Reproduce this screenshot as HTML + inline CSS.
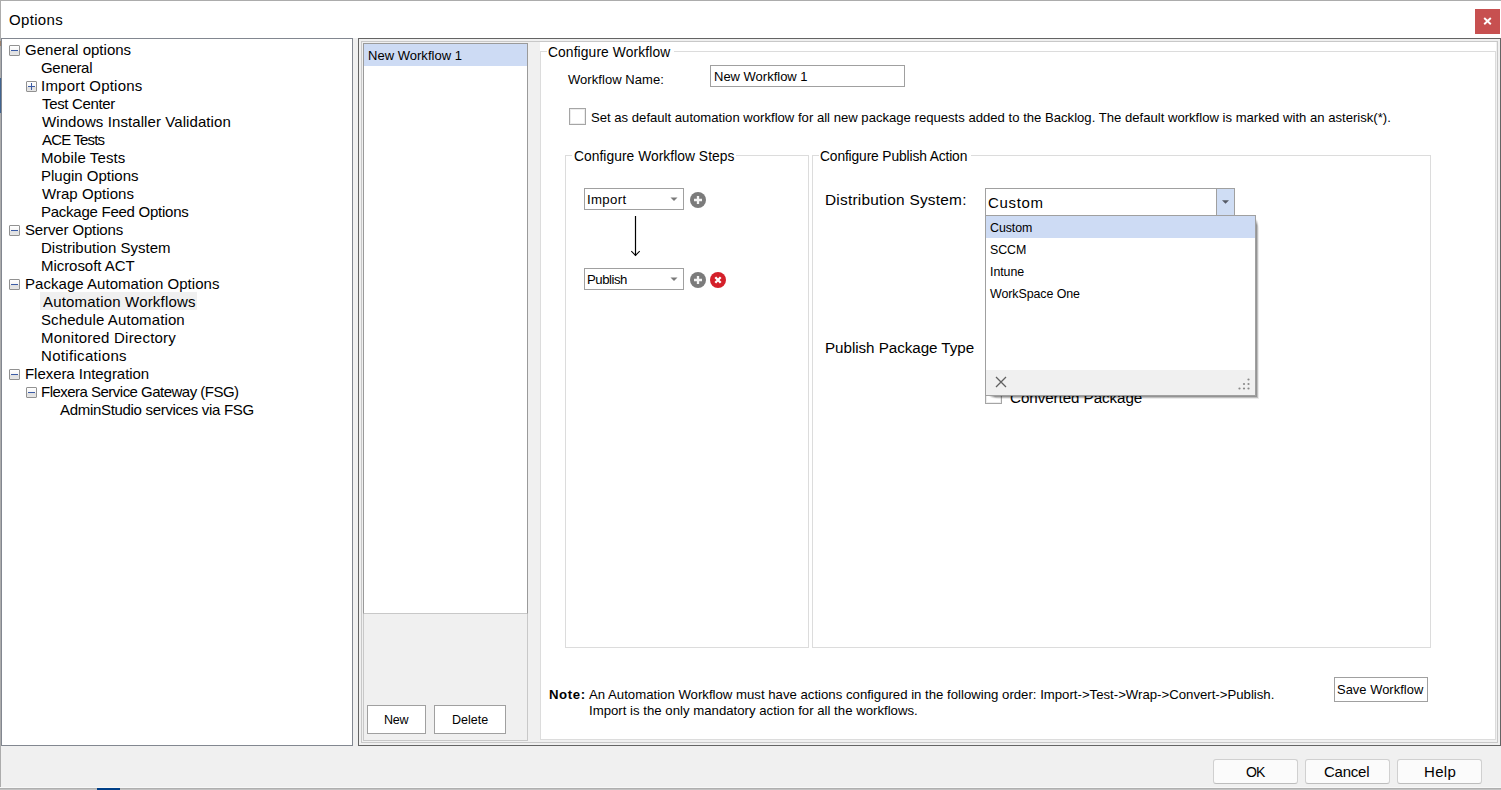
<!DOCTYPE html>
<html><head><meta charset="utf-8"><title>Options</title>
<style>
html,body{margin:0;padding:0;}
body{width:1501px;height:790px;position:relative;overflow:hidden;background:#f0f0f0;
 font-family:"Liberation Sans", sans-serif;}
.t{position:absolute;white-space:pre;}
.r{position:absolute;box-sizing:border-box;}
</style></head><body>
<div class="r" style="left:0px;top:0px;width:1501px;height:38px;background:#fff;"></div>
<div class="r" style="left:0px;top:0px;width:1501px;height:1px;background:#acacac;"></div>
<div class="r" style="left:0px;top:0px;width:1px;height:790px;background:#acacac;"></div>
<div class="r" style="left:0px;top:78px;width:1px;height:35px;background:#41648f;"></div>
<div class="r" style="left:0px;top:41px;width:1px;height:5px;background:#9a7f6a;"></div>
<div class="r" style="left:0px;top:787px;width:1501px;height:1px;background:#f7f7f7;"></div>
<div class="r" style="left:0px;top:788px;width:1501px;height:1px;background:#afafaf;"></div>
<div class="r" style="left:0px;top:789px;width:1501px;height:1px;background:#c2c2c2;"></div>
<div class="r" style="left:97px;top:788px;width:23px;height:2px;background:#003f87;"></div>
<div class="t" style="left:9px;top:12.30px;font-size:15px;line-height:15px;color:#000;font-weight:400;letter-spacing:0.333px;">Options</div>
<div class="r" style="left:1475px;top:9px;width:25px;height:25px;background:#c75050;"></div>
<svg style="position:absolute;left:1483px;top:17px" width="9" height="8" viewBox="0 0 9 8"><path d="M1.2 1 L7.8 7.2 M7.8 1 L1.2 7.2" stroke="#fff" stroke-width="1.9"/></svg>
<div class="r" style="left:1px;top:38px;width:352px;height:708px;background:#fff;border:1px solid #828790;"></div>
<div class="r" style="left:40px;top:292px;width:157px;height:18px;background:#f0f0f0;"></div>
<div class="r" style="left:9px;top:45px;width:11px;height:11px;border:1px solid #919191;border-radius:1px;background:linear-gradient(#fff 0%,#f4f4f4 50%,#dedede 51%,#e6e6e6 100%);"></div>
<div class="r" style="left:11px;top:50px;width:7px;height:1px;background:#3b5ba5;"></div>
<div class="t" style="left:25px;top:42.30px;font-size:15px;line-height:15px;color:#000;font-weight:400;letter-spacing:0.014px;">General options</div>
<div class="t" style="left:41px;top:60.30px;font-size:15px;line-height:15px;color:#000;font-weight:400;letter-spacing:-0.317px;">General</div>
<div class="r" style="left:26px;top:81px;width:11px;height:11px;border:1px solid #919191;border-radius:1px;background:linear-gradient(#fff 0%,#f4f4f4 50%,#dedede 51%,#e6e6e6 100%);"></div>
<div class="r" style="left:28px;top:86px;width:7px;height:1px;background:#3b5ba5;"></div>
<div class="r" style="left:31px;top:83px;width:1px;height:7px;background:#3b5ba5;"></div>
<div class="t" style="left:41px;top:78.30px;font-size:15px;line-height:15px;color:#000;font-weight:400;letter-spacing:0.223px;">Import Options</div>
<div class="t" style="left:42px;top:96.30px;font-size:15px;line-height:15px;color:#000;font-weight:400;letter-spacing:-0.34px;">Test Center</div>
<div class="t" style="left:42px;top:114.30px;font-size:15px;line-height:15px;color:#000;font-weight:400;letter-spacing:0.085px;">Windows Installer Validation</div>
<div class="t" style="left:42px;top:132.30px;font-size:15px;line-height:15px;color:#000;font-weight:400;letter-spacing:-0.837px;">ACE Tests</div>
<div class="t" style="left:41px;top:150.30px;font-size:15px;line-height:15px;color:#000;font-weight:400;letter-spacing:0.109px;">Mobile Tests</div>
<div class="t" style="left:41px;top:168.30px;font-size:15px;line-height:15px;color:#000;font-weight:400;letter-spacing:0.0px;">Plugin Options</div>
<div class="t" style="left:42px;top:186.30px;font-size:15px;line-height:15px;color:#000;font-weight:400;letter-spacing:0.045px;">Wrap Options</div>
<div class="t" style="left:41px;top:204.30px;font-size:15px;line-height:15px;color:#000;font-weight:400;letter-spacing:-0.253px;">Package Feed Options</div>
<div class="r" style="left:9px;top:225px;width:11px;height:11px;border:1px solid #919191;border-radius:1px;background:linear-gradient(#fff 0%,#f4f4f4 50%,#dedede 51%,#e6e6e6 100%);"></div>
<div class="r" style="left:11px;top:230px;width:7px;height:1px;background:#3b5ba5;"></div>
<div class="t" style="left:25px;top:222.30px;font-size:15px;line-height:15px;color:#000;font-weight:400;letter-spacing:-0.138px;">Server Options</div>
<div class="t" style="left:41px;top:240.30px;font-size:15px;line-height:15px;color:#000;font-weight:400;letter-spacing:0.022px;">Distribution System</div>
<div class="t" style="left:41px;top:258.30px;font-size:15px;line-height:15px;color:#000;font-weight:400;letter-spacing:-0.05px;">Microsoft ACT</div>
<div class="r" style="left:9px;top:279px;width:11px;height:11px;border:1px solid #919191;border-radius:1px;background:linear-gradient(#fff 0%,#f4f4f4 50%,#dedede 51%,#e6e6e6 100%);"></div>
<div class="r" style="left:11px;top:284px;width:7px;height:1px;background:#3b5ba5;"></div>
<div class="t" style="left:25px;top:276.30px;font-size:15px;line-height:15px;color:#000;font-weight:400;letter-spacing:0.04px;">Package Automation Options</div>
<div class="t" style="left:43px;top:294.30px;font-size:15px;line-height:15px;color:#000;font-weight:400;letter-spacing:0.184px;">Automation Workflows</div>
<div class="t" style="left:41px;top:312.30px;font-size:15px;line-height:15px;color:#000;font-weight:400;letter-spacing:0.106px;">Schedule Automation</div>
<div class="t" style="left:41px;top:330.30px;font-size:15px;line-height:15px;color:#000;font-weight:400;letter-spacing:0.217px;">Monitored Directory</div>
<div class="t" style="left:41px;top:348.30px;font-size:15px;line-height:15px;color:#000;font-weight:400;letter-spacing:0.325px;">Notifications</div>
<div class="r" style="left:9px;top:369px;width:11px;height:11px;border:1px solid #919191;border-radius:1px;background:linear-gradient(#fff 0%,#f4f4f4 50%,#dedede 51%,#e6e6e6 100%);"></div>
<div class="r" style="left:11px;top:374px;width:7px;height:1px;background:#3b5ba5;"></div>
<div class="t" style="left:25px;top:366.30px;font-size:15px;line-height:15px;color:#000;font-weight:400;letter-spacing:-0.05px;">Flexera Integration</div>
<div class="r" style="left:26px;top:387px;width:11px;height:11px;border:1px solid #919191;border-radius:1px;background:linear-gradient(#fff 0%,#f4f4f4 50%,#dedede 51%,#e6e6e6 100%);"></div>
<div class="r" style="left:28px;top:392px;width:7px;height:1px;background:#3b5ba5;"></div>
<div class="t" style="left:41px;top:384.30px;font-size:15px;line-height:15px;color:#000;font-weight:400;letter-spacing:-0.518px;">Flexera Service Gateway (FSG)</div>
<div class="t" style="left:60px;top:402.30px;font-size:15px;line-height:15px;color:#000;font-weight:400;letter-spacing:-0.311px;">AdminStudio services via FSG</div>
<div class="r" style="left:358px;top:38px;width:1143px;height:708px;border:1px solid #646464;background:#f0f0f0;"></div>
<div class="r" style="left:361px;top:41px;width:1137px;height:702px;border:1px solid #c8c8c8;"></div>
<div class="r" style="left:363px;top:43px;width:165px;height:698px;border:1px solid #c8c8c8;background:#f0f0f0;"></div>
<div class="r" style="left:363px;top:43px;width:165px;height:571px;border:1px solid #9a9a9a;border-bottom-color:#c8c8c8;background:#fff;"></div>
<div class="r" style="left:364px;top:44px;width:163px;height:22px;background:#cddbf4;"></div>
<div class="t" style="left:368px;top:49.00px;font-size:13px;line-height:13px;color:#000;font-weight:400;letter-spacing:0.023px;">New Workflow 1</div>
<div class="r" style="left:367px;top:705px;width:59px;height:29px;border:1px solid #a0a0a0;background:#fff;"></div>
<div class="r" style="left:434px;top:705px;width:72px;height:29px;border:1px solid #a0a0a0;background:#fff;"></div>
<div class="t" style="left:384px;top:714.42px;font-size:12.5px;line-height:12.5px;color:#000;font-weight:400;letter-spacing:-0.3px;">New</div>
<div class="t" style="left:452px;top:714.42px;font-size:12.5px;line-height:12.5px;color:#000;font-weight:400;letter-spacing:0.02px;">Delete</div>
<div class="r" style="left:540px;top:42px;width:956px;height:698px;background:#fff;"></div>
<div class="r" style="left:540px;top:51px;width:956px;height:689px;border:1px solid #dcdcdc;"></div>
<div class="r" style="left:547px;top:45px;width:127px;height:13px;background:#fff;"></div>
<div class="t" style="left:548px;top:46.32px;font-size:13.8px;line-height:13.8px;color:#000;font-weight:400;letter-spacing:0.118px;">Configure Workflow</div>
<div class="t" style="left:568px;top:73.00px;font-size:13px;line-height:13px;color:#000;font-weight:400;letter-spacing:0.054px;">Workflow Name:</div>
<div class="r" style="left:710px;top:65px;width:195px;height:22px;border:1px solid #a0a0a0;background:#fff;"></div>
<div class="t" style="left:714px;top:70.00px;font-size:13px;line-height:13px;color:#000;font-weight:400;letter-spacing:-0.008px;">New Workflow 1</div>
<div class="r" style="left:569px;top:108px;width:17px;height:17px;border:1px solid #a5a5a5;background:#fff;box-shadow:inset 0 0 0 1px #ededed;"></div>
<div class="t" style="left:591px;top:110.91px;font-size:13.1px;line-height:13.1px;color:#000;font-weight:400;letter-spacing:0.007px;">Set as default automation workflow for all new package requests added to the Backlog. The default workflow is marked with an asterisk(*).</div>
<div class="r" style="left:565px;top:155px;width:244px;height:493px;border:1px solid #dcdcdc;"></div>
<div class="r" style="left:572px;top:148px;width:164px;height:15px;background:#fff;"></div>
<div class="t" style="left:574px;top:150.32px;font-size:13.8px;line-height:13.8px;color:#000;font-weight:400;letter-spacing:0.048px;">Configure Workflow Steps</div>
<div class="r" style="left:812px;top:155px;width:619px;height:493px;border:1px solid #dcdcdc;"></div>
<div class="r" style="left:819px;top:148px;width:152px;height:15px;background:#fff;"></div>
<div class="t" style="left:820px;top:150.32px;font-size:13.8px;line-height:13.8px;color:#000;font-weight:400;letter-spacing:-0.13px;">Configure Publish Action</div>
<div class="r" style="left:584px;top:188px;width:100px;height:22px;border:1px solid #a0a0a0;background:#fff;"></div>
<div class="t" style="left:587px;top:192.83px;font-size:13.2px;line-height:13.2px;color:#000;font-weight:400;letter-spacing:0.34px;">Import</div>
<svg style="position:absolute;left:670px;top:197px" width="8" height="5" viewBox="0 0 8 5"><path d="M0.5 0.5 L7.5 0.5 L4 4 Z" fill="#7a7a7a"/></svg>
<svg style="position:absolute;left:690px;top:192px" width="16" height="16" viewBox="0 0 16 16"><circle cx="8" cy="8" r="8" fill="#7b7b7b"/><path d="M8 4 V12 M4 8 H12" stroke="#f4f4f4" stroke-width="2.3"/></svg>
<svg style="position:absolute;left:625px;top:212px" width="20" height="48" viewBox="0 0 20 48"><path d="M10.5 4 V43.5" stroke="#000" stroke-width="1.2"/><path d="M6.3 39.2 L10.5 43.4 L14.7 39.2" stroke="#000" stroke-width="1.05" fill="none"/></svg>
<div class="r" style="left:584px;top:268px;width:100px;height:22px;border:1px solid #a0a0a0;background:#fff;"></div>
<div class="t" style="left:587px;top:272.83px;font-size:13.2px;line-height:13.2px;color:#000;font-weight:400;letter-spacing:-0.467px;">Publish</div>
<svg style="position:absolute;left:670px;top:277px" width="8" height="5" viewBox="0 0 8 5"><path d="M0.5 0.5 L7.5 0.5 L4 4 Z" fill="#7a7a7a"/></svg>
<svg style="position:absolute;left:690px;top:272px" width="16" height="16" viewBox="0 0 16 16"><circle cx="8" cy="8" r="8" fill="#7b7b7b"/><path d="M8 4 V12 M4 8 H12" stroke="#f4f4f4" stroke-width="2.3"/></svg>
<svg style="position:absolute;left:710px;top:272px" width="16" height="16" viewBox="0 0 16 16"><circle cx="8" cy="8" r="8" fill="#d4202a"/><path d="M5.3 5.3 L10.7 10.7 M10.7 5.3 L5.3 10.7" stroke="#fff" stroke-width="2.3"/></svg>
<div class="t" style="left:825px;top:191.96px;font-size:15.4px;line-height:15.4px;color:#000;font-weight:400;letter-spacing:0.242px;">Distribution System:</div>
<div class="t" style="left:825px;top:340.13px;font-size:15.2px;line-height:15.2px;color:#000;font-weight:400;letter-spacing:-0.047px;">Publish Package Type</div>
<div class="r" style="left:985px;top:387px;width:17px;height:17px;border:1px solid #a5a5a5;background:#fff;box-shadow:inset 0 0 0 1px #ededed;"></div>
<div class="t" style="left:1010px;top:390.13px;font-size:15.2px;line-height:15.2px;color:#000;font-weight:400;letter-spacing:-0.069px;">Converted Package</div>
<div class="r" style="left:985px;top:188px;width:250px;height:28px;border:1px solid #a0a0a0;background:#fff;"></div>
<div class="r" style="left:1216px;top:189px;width:18px;height:26px;background:#cfddf4;border-left:1px solid #a0a0a0;"></div>
<svg style="position:absolute;left:1222px;top:200px" width="7" height="4" viewBox="0 0 7 4"><path d="M0 0.3 L7 0.3 L3.5 3.8 Z" fill="#555a66"/></svg>
<div class="t" style="left:988px;top:195.30px;font-size:15px;line-height:15px;color:#000;font-weight:400;letter-spacing:0.66px;">Custom</div>
<div class="r" style="left:1256px;top:219px;width:1px;height:178px;background:linear-gradient(rgba(0,0,0,0),rgba(0,0,0,.42) 6px);"></div>
<div class="r" style="left:1257px;top:220px;width:1px;height:178px;background:linear-gradient(rgba(0,0,0,0),rgba(0,0,0,.25) 6px);"></div>
<div class="r" style="left:1258px;top:222px;width:1px;height:176px;background:linear-gradient(rgba(0,0,0,0),rgba(0,0,0,.08) 6px);"></div>
<div class="r" style="left:989px;top:396px;width:267px;height:1px;background:linear-gradient(90deg,rgba(0,0,0,0),rgba(0,0,0,.42) 6px);"></div>
<div class="r" style="left:990px;top:397px;width:267px;height:1px;background:linear-gradient(90deg,rgba(0,0,0,0),rgba(0,0,0,.25) 6px);"></div>
<div class="r" style="left:992px;top:398px;width:267px;height:1px;background:linear-gradient(90deg,rgba(0,0,0,0),rgba(0,0,0,.08) 6px);"></div>
<div class="r" style="left:985px;top:215px;width:271px;height:181px;border:1px solid #a0a0a0;background:#fff;"></div>
<div class="r" style="left:986px;top:216px;width:269px;height:22px;background:#cddbf4;"></div>
<div class="t" style="left:990px;top:221.50px;font-size:12.4px;line-height:12.4px;color:#000;font-weight:400;letter-spacing:-0.06px;">Custom</div>
<div class="t" style="left:990px;top:243.50px;font-size:12.4px;line-height:12.4px;color:#000;font-weight:400;letter-spacing:-0.06px;">SCCM</div>
<div class="t" style="left:990px;top:265.50px;font-size:12.4px;line-height:12.4px;color:#000;font-weight:400;letter-spacing:-0.06px;">Intune</div>
<div class="t" style="left:990px;top:287.50px;font-size:12.4px;line-height:12.4px;color:#000;font-weight:400;letter-spacing:-0.06px;">WorkSpace One</div>
<div class="r" style="left:986px;top:370px;width:269px;height:25px;background:#f0f0f0;"></div>
<svg style="position:absolute;left:995px;top:376px" width="12" height="12" viewBox="0 0 12 12"><path d="M1 1 L11 11 M11 1 L1 11" stroke="#606060" stroke-width="1.3"/></svg>
<svg style="position:absolute;left:1236px;top:376px" width="16" height="16" viewBox="0 0 16 16"><g fill="#8a8a8a"><circle cx="12.5" cy="3.5" r="1.1"/><circle cx="8" cy="8" r="1.1"/><circle cx="12.5" cy="8" r="1.1"/><circle cx="3.5" cy="12.5" r="1.1"/><circle cx="8" cy="12.5" r="1.1"/><circle cx="12.5" cy="12.5" r="1.1"/></g></svg>
<div class="t" style="left:549px;top:687.83px;font-size:13.2px;line-height:13.2px;color:#000;font-weight:700;letter-spacing:0.6px;">Note:</div>
<div class="t" style="left:589px;top:687.83px;font-size:13.2px;line-height:13.2px;color:#000;font-weight:400;letter-spacing:-0.002px;">An Automation Workflow must have actions configured in the following order: Import-&gt;Test-&gt;Wrap-&gt;Convert-&gt;Publish.</div>
<div class="t" style="left:589px;top:703.83px;font-size:13.2px;line-height:13.2px;color:#000;font-weight:400;letter-spacing:0.007px;">Import is the only mandatory action for all the workflows.</div>
<div class="r" style="left:1334px;top:677px;width:94px;height:25px;border:1px solid #a0a0a0;background:#fff;"></div>
<div class="t" style="left:1337px;top:684.08px;font-size:12.9px;line-height:12.9px;color:#000;font-weight:400;letter-spacing:0.042px;">Save Workflow</div>
<div class="r" style="left:1213px;top:759px;width:85px;height:25px;border:1px solid #d0d0d0;border-bottom-color:#bdbdbd;border-radius:3px;background:#fbfbfb;"></div>
<div class="r" style="left:1305px;top:759px;width:85px;height:25px;border:1px solid #d0d0d0;border-bottom-color:#bdbdbd;border-radius:3px;background:#fbfbfb;"></div>
<div class="r" style="left:1397px;top:759px;width:85px;height:25px;border:1px solid #d0d0d0;border-bottom-color:#bdbdbd;border-radius:3px;background:#fbfbfb;"></div>
<div class="t" style="left:1246px;top:765.15px;font-size:14px;line-height:14px;color:#000;font-weight:400;letter-spacing:-1.0px;">OK</div>
<div class="t" style="left:1324px;top:764.30px;font-size:15px;line-height:15px;color:#000;font-weight:400;letter-spacing:-0.24px;">Cancel</div>
<div class="t" style="left:1424px;top:764.30px;font-size:15px;line-height:15px;color:#000;font-weight:400;letter-spacing:0.3px;">Help</div>
</body></html>
